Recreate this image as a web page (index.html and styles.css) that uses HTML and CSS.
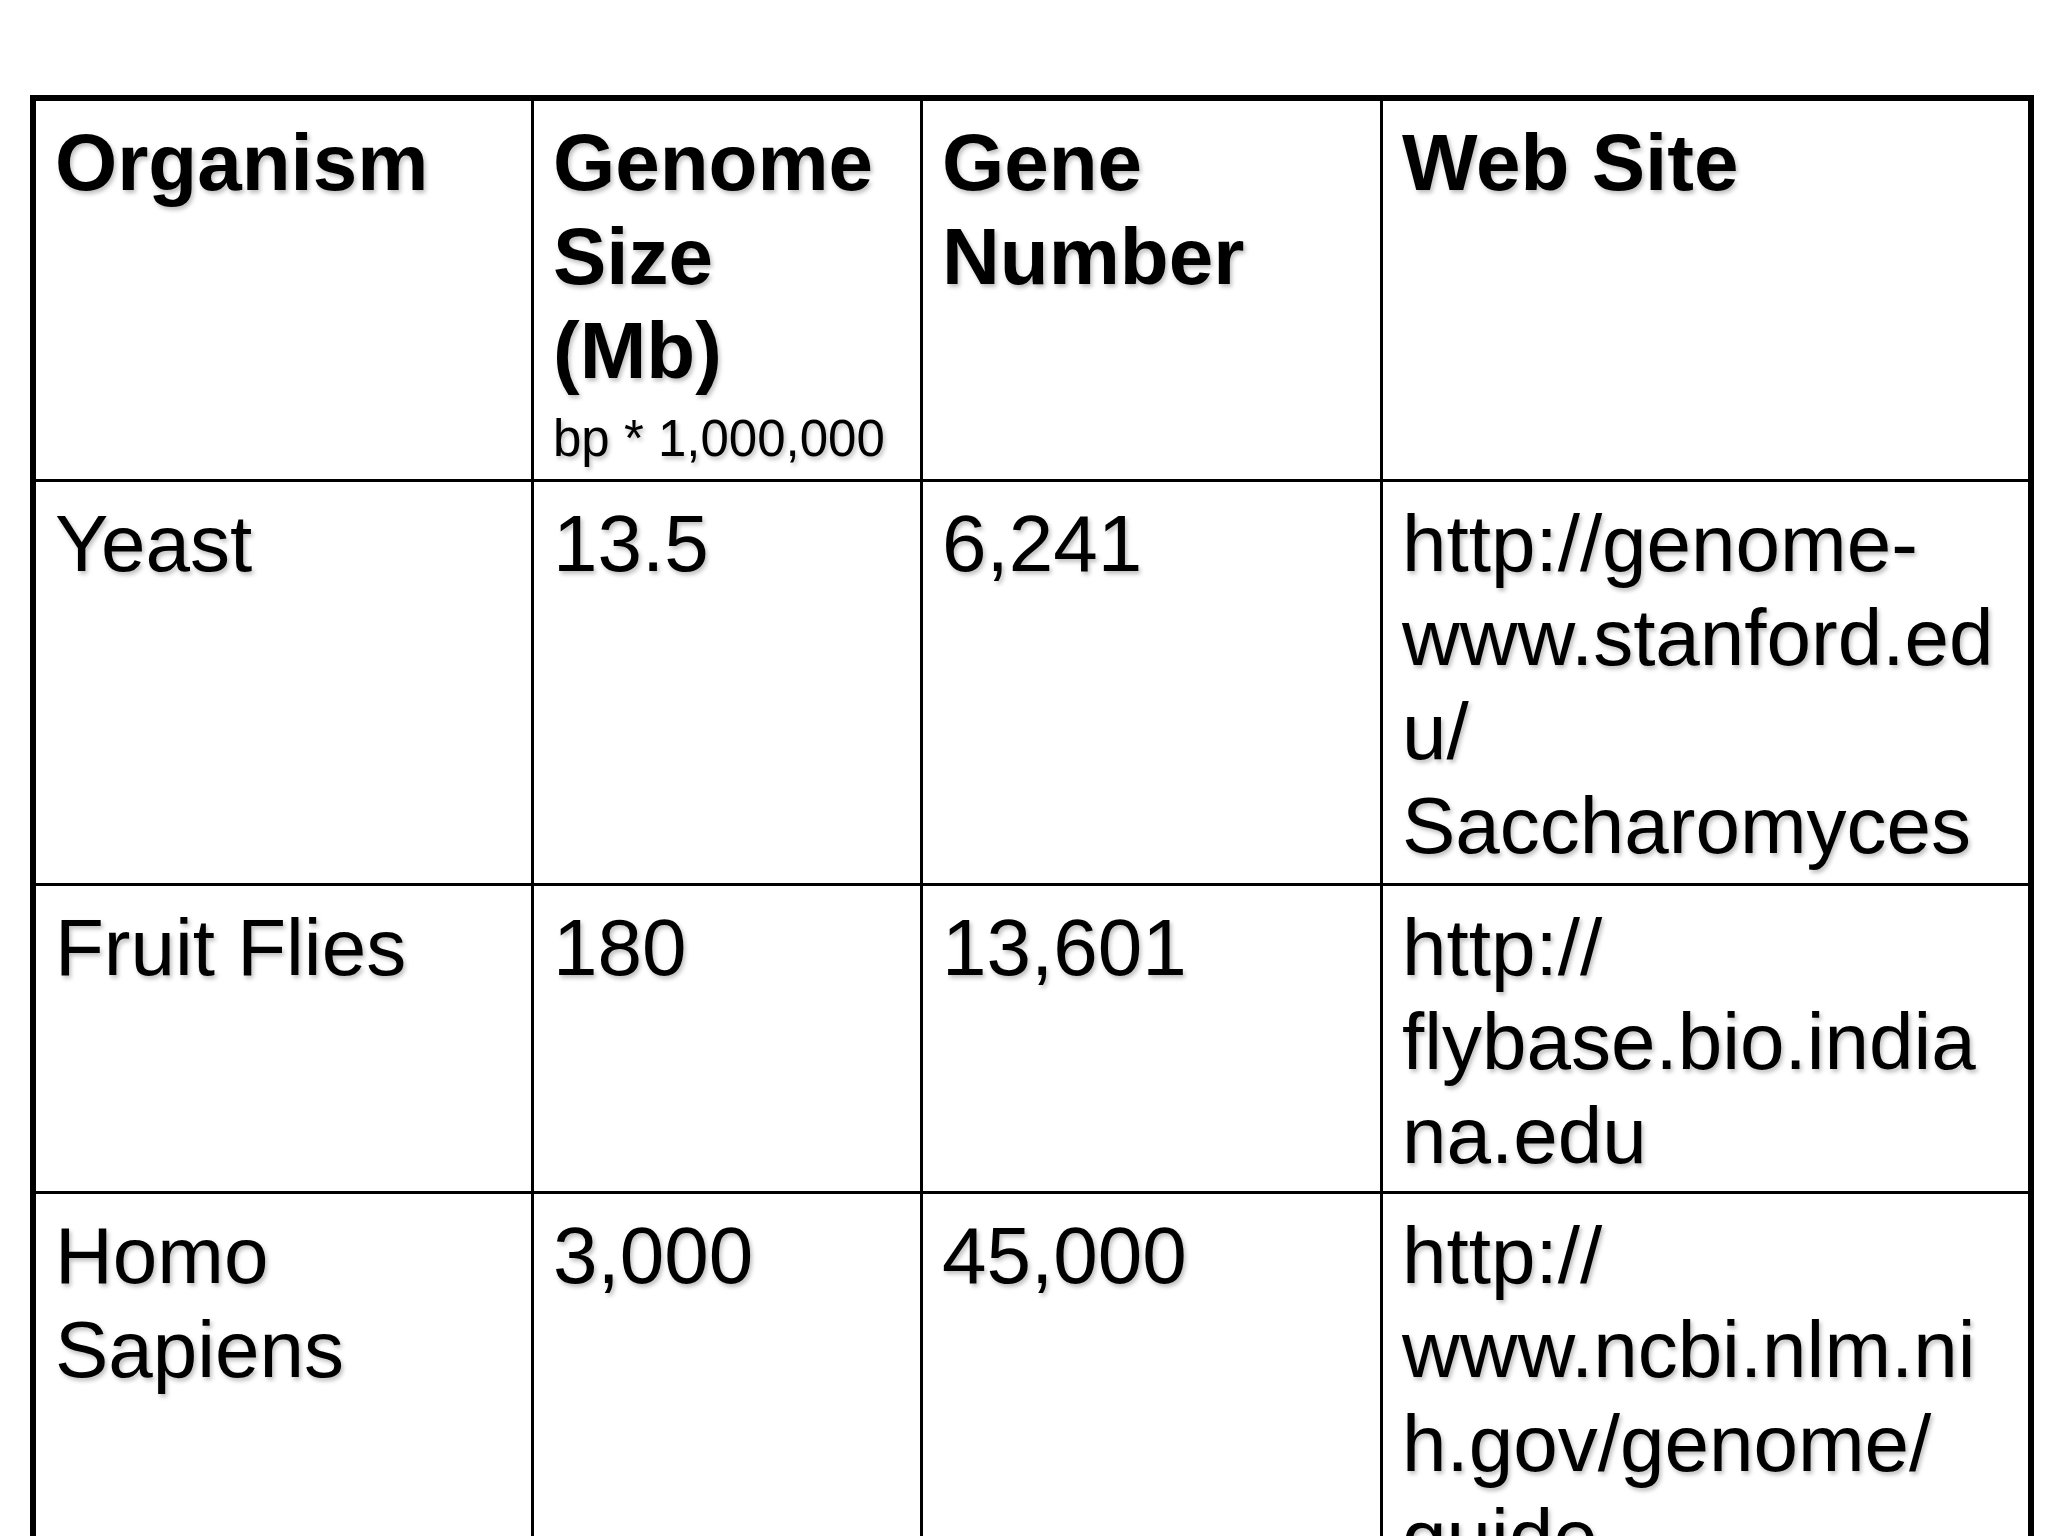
FILE: index.html
```html
<!DOCTYPE html>
<html lang="en">
<head>
<meta charset="utf-8">
<title>Genome sizes</title>
<link rel="stylesheet" href="styles.css">
</head>
<body>
<div class="slide">
  <table class="genomes">
    <colgroup>
      <col class="c1">
      <col class="c2">
      <col class="c3">
      <col class="c4">
    </colgroup>
    <thead>
      <tr class="r-head">
        <th>Organism</th>
        <th>Genome<br>Size<br>(Mb)<span class="unit">bp * 1,000,000</span></th>
        <th>Gene<br>Number</th>
        <th>Web Site</th>
      </tr>
    </thead>
    <tbody>
      <tr class="r-yeast">
        <td>Yeast</td>
        <td>13.5</td>
        <td>6,241</td>
        <td>http://genome-<br>www.stanford.ed<br>u/<br>Saccharomyces</td>
      </tr>
      <tr class="r-fly">
        <td>Fruit Flies</td>
        <td>180</td>
        <td>13,601</td>
        <td>http://<br>flybase.bio.india<br>na.edu</td>
      </tr>
      <tr class="r-homo">
        <td>Homo<br>Sapiens</td>
        <td>3,000</td>
        <td>45,000</td>
        <td>http://<br>www.ncbi.nlm.ni<br>h.gov/genome/<br>guide</td>
      </tr>
    </tbody>
  </table>
</div>
</body>
</html>
```

FILE: styles.css
```css
html, body {
  margin: 0;
  padding: 0;
  background: #ffffff;
}

body {
  width: 2048px;
  height: 1536px;
  overflow: hidden;
}

.slide {
  padding: 95px 0 0 30px;
}

.genomes {
  border-collapse: separate;
  border-spacing: 0;
  table-layout: fixed;
  width: 2004px;
  border: 6px solid #000;
  font-family: "Liberation Sans", Arial, sans-serif;
  font-size: 80px;
  line-height: 94px;
  color: #000;
}

.c1 { width: 498px; }
.c2 { width: 389px; }
.c3 { width: 460px; }
.c4 { width: 645px; }

.genomes th,
.genomes td {
  box-sizing: border-box;
  vertical-align: top;
  text-align: left;
  padding: 15px 8px 0 19px;
  border-right: 3px solid #000;
  border-bottom: 3px solid #000;
  text-shadow: 2px 3px 4px rgba(0, 0, 0, 0.25);
  white-space: nowrap;
  overflow: hidden;
}

.genomes th:last-child,
.genomes td:last-child {
  border-right: none;
}

.genomes tbody tr:last-child td {
  border-bottom: none;
}

.genomes th {
  font-weight: bold;
}

.unit {
  display: block;
  font-weight: normal;
  font-size: 51px;
  line-height: 81px;
}

.r-head { height: 379px; }
.r-yeast { height: 404px; }
.r-fly { height: 308px; }
.r-homo { height: 460px; }
```
